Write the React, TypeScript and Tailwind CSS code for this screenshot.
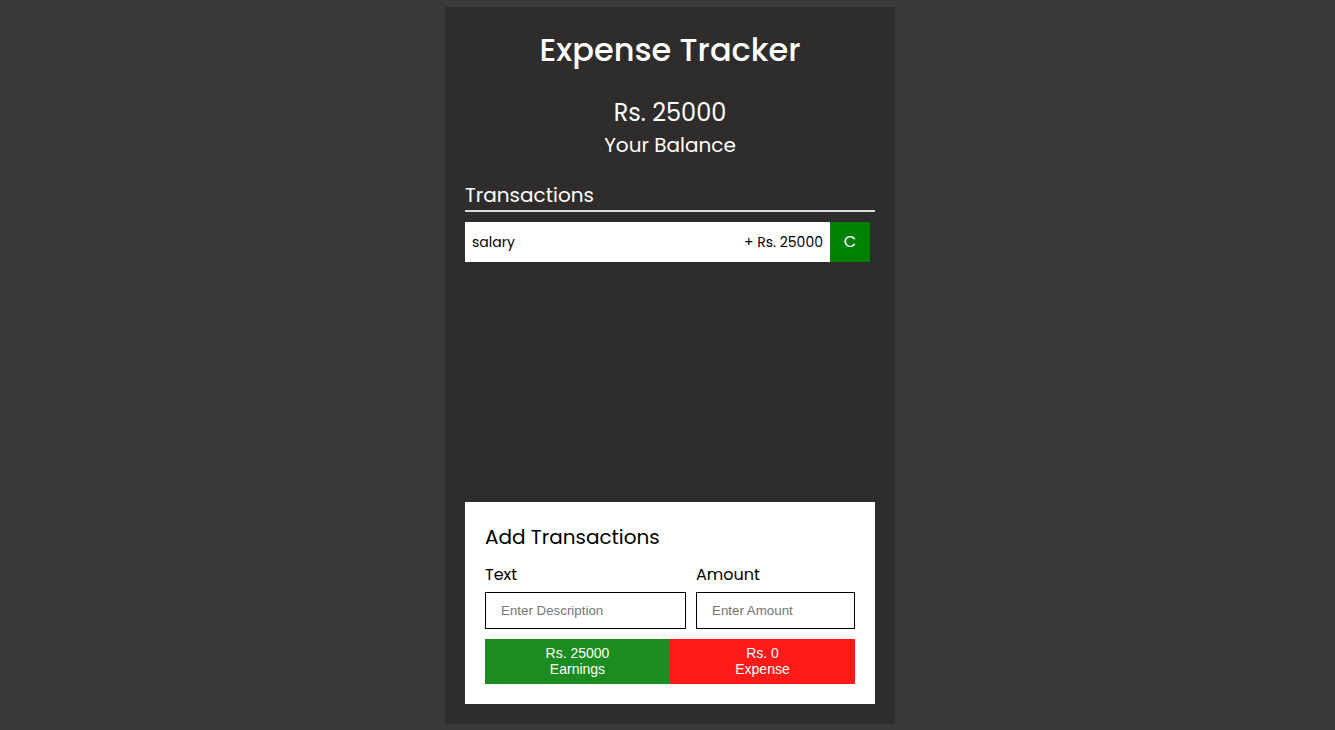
import React from 'react';

const sans = "font-['Poppins','Noto_Sans','Open_Sans',sans-serif]";

export default function App() {
  return (
    <div className={`min-h-screen bg-[#3a3a3a] flex justify-center pt-[7px] pl-[5px] ${sans}`}>
      <div className="w-[450px] h-[717px] bg-[#2f2d2c] px-5 flex flex-col text-white">
        {/* Header */}
        <h1 className="text-[32px] font-medium text-center leading-[48px] mt-[19px]">Expense Tracker</h1>
        <div className="text-center mt-[21px]">
          <div className="text-[24px] leading-[36px]">Rs. 25000</div>
          <div className="text-[20px] leading-[30px] -mt-[1px]">Your Balance</div>
        </div>

        {/* Transactions list */}
        <h2 className="text-[20px] leading-[30px] mt-[20px] border-b-2 border-[#d9d9d9]">Transactions</h2>
        <div className="mt-[10px] flex h-10 w-[405px]">
          <div className="flex-1 bg-white text-black flex items-center justify-between px-[7px] text-[14px]">
            <span>salary</span>
            <span>+ Rs. 25000</span>
          </div>
          <button className="w-10 h-10 bg-[#008000] text-white text-[16px] flex items-center justify-center">C</button>
        </div>

        {/* Add transaction */}
        <div className="mt-auto mb-5 bg-white text-black p-5">
          <h3 className="text-[20px] leading-[30px]">Add Transactions</h3>
          <div className="flex gap-[10px] mt-[11px]">
            <label className="flex flex-col w-[201px] min-w-0">
              <span className="text-[16px] leading-[24px]">Text</span>
              <input
                placeholder="Enter Description"
                className="mt-[5px] w-full min-w-0 h-[37px] border border-black px-[15px] text-[13.33px] font-['Liberation_Sans',Arial,sans-serif] placeholder:text-[#757575] outline-none"
              />
            </label>
            <label className="flex flex-col flex-1 min-w-0">
              <span className="text-[16px] leading-[24px]">Amount</span>
              <input
                placeholder="Enter Amount"
                className="mt-[5px] w-full min-w-0 h-[37px] border border-black px-[15px] text-[13.33px] font-['Liberation_Sans',Arial,sans-serif] placeholder:text-[#757575] outline-none"
              />
            </label>
          </div>
          <div className="flex mt-[10px] h-[45px] text-white text-[14px] leading-[16px] font-['Liberation_Sans',Arial,sans-serif]">
            <button className="w-[185px] bg-[#1b8c1f] flex flex-col items-center justify-center pb-[2px]">
              <span>Rs. 25000</span>
              <span>Earnings</span>
            </button>
            <button className="flex-1 bg-[#ff1a1a] flex flex-col items-center justify-center pb-[2px]">
              <span>Rs. 0</span>
              <span>Expense</span>
            </button>
          </div>
        </div>
      </div>
    </div>
  );
}
